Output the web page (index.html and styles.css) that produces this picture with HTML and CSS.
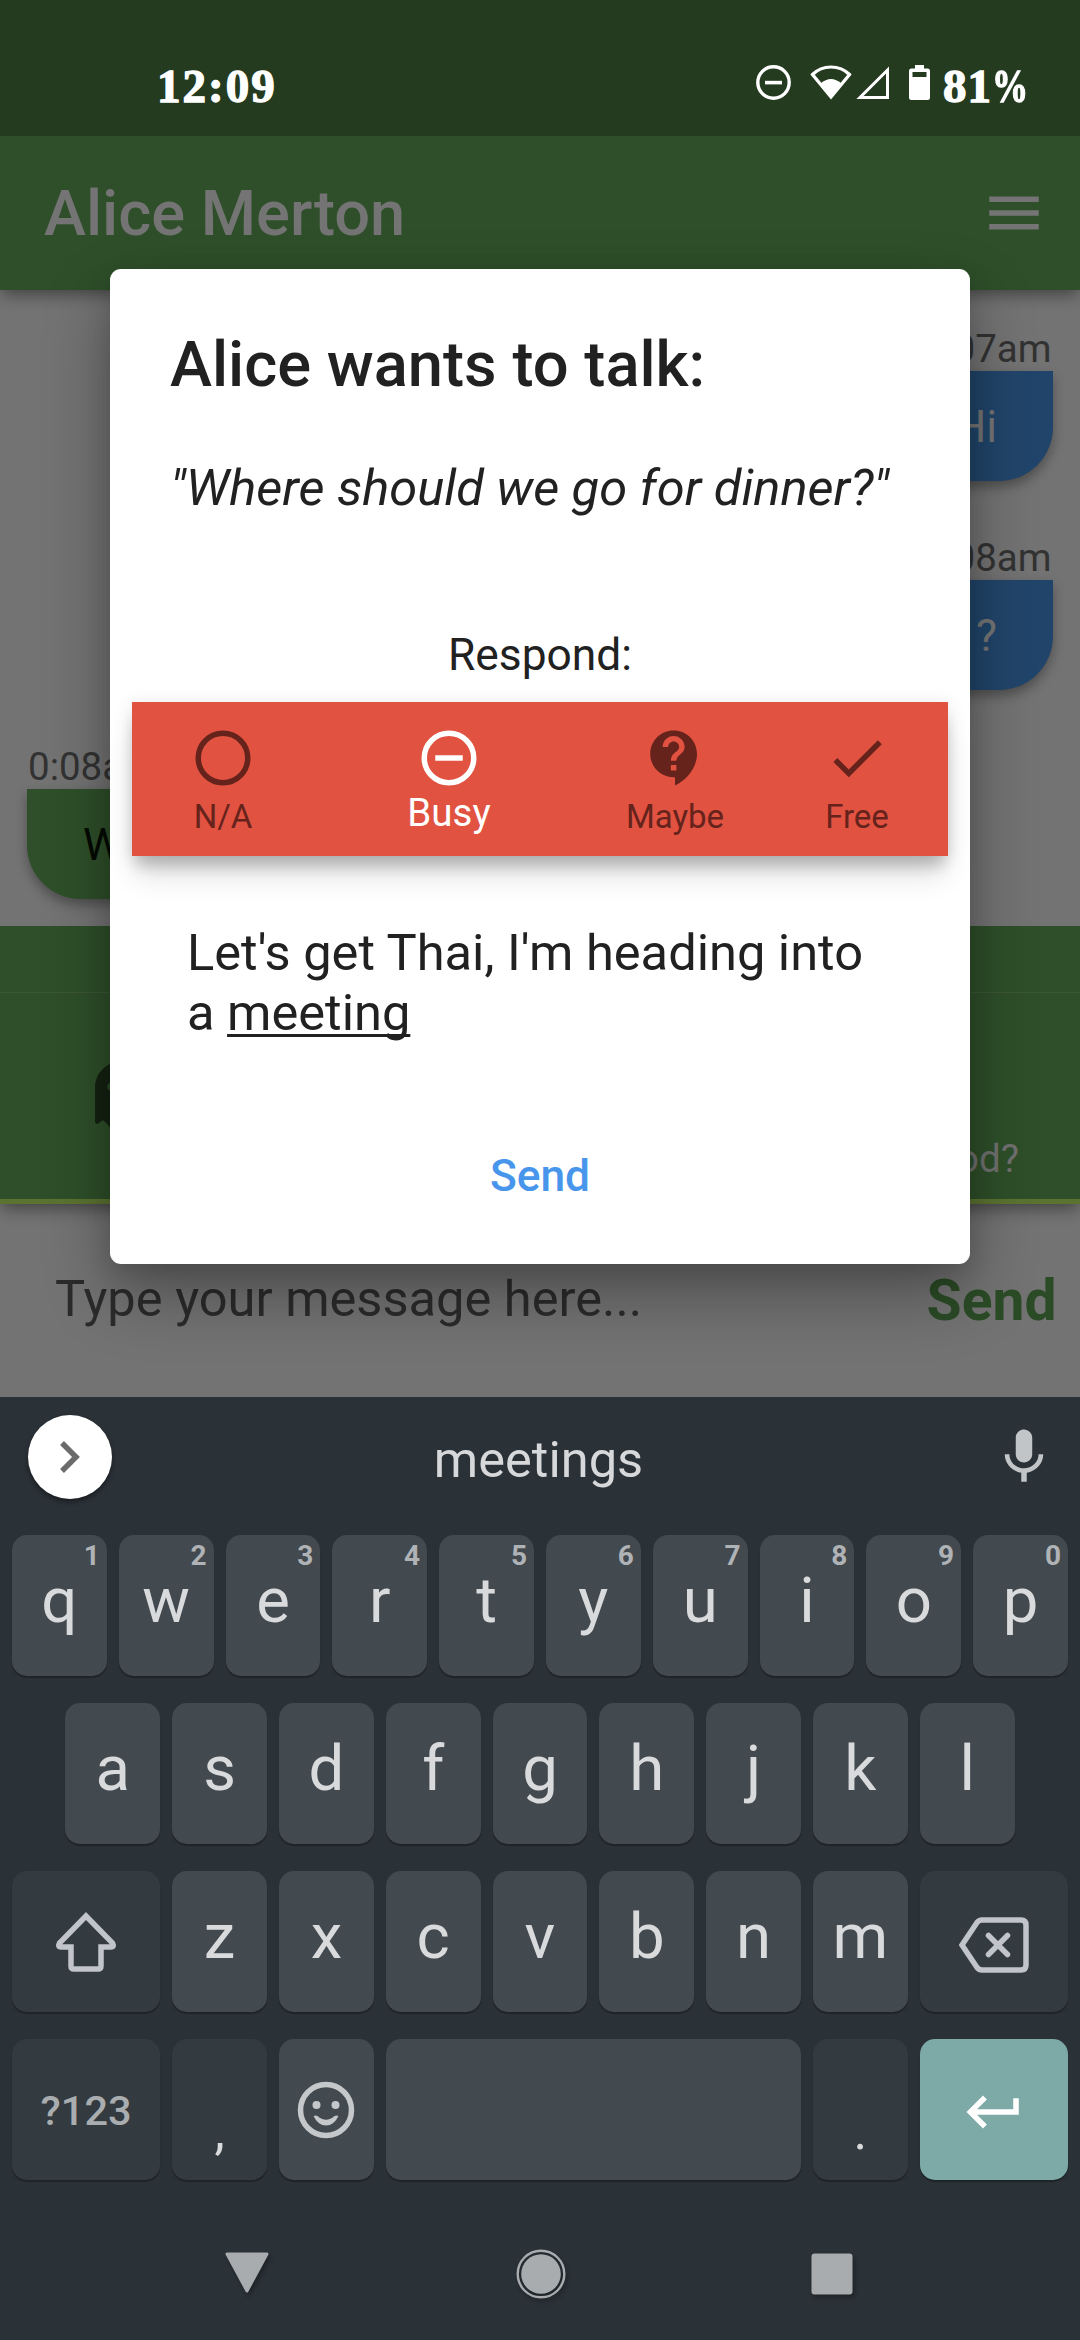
FILE: index.html
```html
<!DOCTYPE html>
<html lang="en">
<head>
<meta charset="utf-8">
<title>Alice Merton</title>
<link rel="stylesheet" href="styles.css">
</head>
<body>
<div class="phone">
  <header class="status">
    <span class="status-text">12:09</span>
    <div class="status-right">
      <svg class="dnd" width="35" height="35" viewBox="0 0 35 35"><circle cx="17.5" cy="17.5" r="15.7" fill="none" stroke="#fff" stroke-width="3.4"/><path d="M9 15.8h17v3.6H9z" fill="#fff"/></svg>
      <svg class="wifi" width="42" height="35" viewBox="0 0 42 35"><path d="M2.5 9.5C12.500 -.5 29.500 -.5 39.500 9.500L21 32z" fill="none" stroke="#fff" stroke-width="3.2"/><path d="M10.500 18.500Q21 9.500 31.500 18.500L21 33z" fill="#fff"/></svg>
      <svg class="signal" width="35" height="35" viewBox="0 0 35 35"><path d="M32.500 5V32.500H5z" fill="none" stroke="#fff" stroke-width="3"/></svg>
      <svg class="battery" width="21" height="35" viewBox="0 0 21 35"><path fill="#fff" fill-rule="evenodd" d="M6 0h9v3.500h3.500q2.500 0 2.500 2.500v26.500q0 2.500-2.500 2.500H2.500Q0 35 0 32.500V6q0-2.500 2.500-2.500H6zM3.500 7v5h14V7z"/></svg>
      <span class="status-text">81<span class="percent">%</span></span>
    </div>
  </header>
  <div class="appbar">
    <h1 class="appbar-title">Alice Merton</h1>
    <svg width="66" height="66" viewBox="0 0 24 24" fill="#747474"><path d="M3 18h18v-2H3v2zm0-5h18v-2H3v2zm0-7v2h18V6H3z"/></svg>
  </div>
  <main class="chat">
    <div class="message mine"><div class="time">0:07am</div><div class="bubble">Hi</div></div>
    <div class="message mine"><div class="time">0:08am</div><div class="bubble">?</div></div>
    <div class="message theirs"><div class="time">0:08am</div><div class="bubble">Wow</div></div>
  </main>
  <section class="panel">
    <div class="panel-head"></div>
    <div class="panel-body">
      <svg class="ghost" width="49.500" height="66" viewBox="0 0 384 512"><path fill="#142212" d="M186.100.09C81.010 3.240 0 94.920 0 200.050v263.920c0 14.260 17.230 21.390 27.310 11.310l24.920-18.530c6.660-4.950 16-3.990 21.510 2.210l42.950 48.350c6.250 6.250 16.380 6.250 22.630 0l40.720-45.850c6.370-7.170 17.560-7.170 23.920 0l40.720 45.850c6.250 6.250 16.380 6.250 22.630 0l42.950-48.350c5.510-6.200 14.850-7.170 21.510-2.210l24.920 18.530c10.080 10.080 27.310 2.940 27.310-11.310V192C384 84 294.830-3.170 186.100.09zM128 224c-17.670 0-32-14.330-32-32s14.330-32 32-32 32 14.330 32 32-14.330 32-32 32zm128 0c-17.670 0-32-14.330-32-32s14.330-32 32-32 32 14.330 32 32-14.330 32-32 32z"/></svg>
      <span class="mood">Food?</span>
    </div>
  </section>
  <div class="composer"><span class="placeholder">Type your message here...</span><span class="composer-send">Send</span></div>

  <section class="dialog">
    <h2 class="dialog-title">Alice wants to talk:</h2>
    <p class="quote">"Where should we go for dinner?"</p>
    <p class="respond">Respond:</p>
    <nav class="tabs">
      <div class="tab"><svg width="66" height="66" viewBox="0 0 24 24"><circle cx="12" cy="12" r="9" fill="none" stroke="currentColor" stroke-width="2"/></svg><span>N/A</span></div>
      <div class="tab active"><svg width="66" height="66" viewBox="0 0 24 24"><circle cx="12" cy="12" r="9" fill="none" stroke="currentColor" stroke-width="2"/><path d="M7 11h10v2H7z" fill="currentColor"/></svg><span>Busy</span></div>
      <div class="tab"><svg width="66" height="66" viewBox="0 0 24 24" fill="currentColor"><path d="M11.500 2C6.810 2 3 5.810 3 10.500S6.810 19 11.500 19h.5v3c4.860-2.340 8-7 8-11.500C20 5.810 16.190 2 11.500 2zm1 14.500h-2v-2h2v2zm0-3.500h-2c0-3.250 3-3 3-5 0-1.100-.9-2-2-2s-2 .9-2 2h-2c0-2.210 1.790-4 4-4s4 1.790 4 4c0 2.500-3 2.750-3 5z"/></svg><span>Maybe</span></div>
      <div class="tab"><svg width="66" height="66" viewBox="0 0 24 24" fill="currentColor"><path d="M9 16.170L4.830 12l-1.420 1.410L9 19 21 7l-1.410-1.410z"/></svg><span>Free</span></div>
    </nav>
    <p class="reply">Let's get Thai, I'm heading into<br>a <u>meeting</u></p>
    <div class="dialog-send">Send</div>
  </section>

  <section class="keyboard">
    <div class="suggestions">
      <div class="expand"><svg width="22" height="34" viewBox="0 0 22 34"><path d="M3 3l14 14L3 31" fill="none" stroke="#6b6b6b" stroke-width="5.500"/></svg></div>
      <span class="word">meetings</span>
      <svg class="mic" width="66" height="66" viewBox="0 0 24 24" fill="#c1c5c7"><path d="M12 14c1.660 0 2.990-1.340 2.990-3L15 5c0-1.660-1.340-3-3-3S9 3.340 9 5v6c0 1.660 1.340 3 3 3zm5.300-3c0 3-2.540 5.100-5.300 5.100S6.700 14 6.700 11H5c0 3.410 2.720 6.230 6 6.720V21h2v-3.280c3.280-.48 6-3.300 6-6.720h-1.700z"/></svg>
    </div>
    <div class="keys">
      <div class="row">
        <div class="key"><small>1</small>q</div><div class="key"><small>2</small>w</div><div class="key"><small>3</small>e</div><div class="key"><small>4</small>r</div><div class="key"><small>5</small>t</div><div class="key"><small>6</small>y</div><div class="key"><small>7</small>u</div><div class="key"><small>8</small>i</div><div class="key"><small>9</small>o</div><div class="key"><small>0</small>p</div>
      </div>
      <div class="row inset">
        <div class="key">a</div><div class="key">s</div><div class="key">d</div><div class="key">f</div><div class="key">g</div><div class="key">h</div><div class="key">j</div><div class="key">k</div><div class="key">l</div>
      </div>
      <div class="row">
        <div class="key wide dark"><svg width="62" height="60" viewBox="0 0 62 60"><path d="M31 4L4.500 31Q2.500 35 6 35H16V54Q16 57 19 57H43Q46 57 46 54V35H56Q59.500 35 57.500 31z" fill="none" stroke="#c1c4c8" stroke-width="5.500"/></svg></div>
        <div class="key">z</div><div class="key">x</div><div class="key">c</div><div class="key">v</div><div class="key">b</div><div class="key">n</div><div class="key">m</div>
        <div class="key wide dark"><svg class="backspace" width="70" height="56" viewBox="0 0 70 56"><path d="M3 28L18 5.500Q20 3 23 3H62Q67 3 67 8V48Q67 53 62 53H23Q20 53 18 50.500z" fill="none" stroke="#c1c4c8" stroke-width="5.500"/><path d="M29.500 18.500l19 19m0-19l-19 19" stroke="#c1c4c8" stroke-width="5.500" stroke-linecap="round"/></svg></div>
      </div>
      <div class="row">
        <div class="key wide dark symbols">?123</div>
        <div class="key dark punct">,</div>
        <div class="key"><svg class="smile" width="58" height="58" viewBox="0 0 58 58"><circle cx="29" cy="29" r="25.500" fill="none" stroke="#c5c8ca" stroke-width="5.500"/><circle cx="19.500" cy="24" r="4" fill="#c5c8ca"/><circle cx="38.500" cy="24" r="4" fill="#c5c8ca"/><path d="M16.500 35q2-1 4 0q8.500 7.500 17 0q2-1 4 0q-4.500 9.500-12.500 9.500T16.500 35z" fill="#c5c8ca"/></svg></div>
        <div class="key space"></div>
        <div class="key dark punct">.</div>
        <div class="key wide enter"><svg width="66" height="66" viewBox="0 0 24 24" fill="#fff"><path d="M19 7v4H5.830l3.580-3.590L8 6l-6 6 6 6 1.410-1.410L5.830 13H21V7z"/></svg></div>
      </div>
    </div>
    <div class="navbar">
      <svg width="46" height="50" viewBox="0 0 46 50"><path d="M3 5H43L23 42z" fill="#a9acae" stroke="#a9acae" stroke-width="3" stroke-linejoin="round"/></svg>
      <svg width="50" height="50" viewBox="0 0 50 50"><circle cx="25" cy="25" r="23.300" fill="none" stroke="#a9acae" stroke-width="2.400"/><circle cx="25" cy="25" r="19.800" fill="#a9acae"/></svg>
      <svg width="42" height="50" viewBox="0 0 42 50"><rect x=".5" y="4.500" width="41" height="41" rx="3" fill="#a9acae"/></svg>
    </div>
  </section>
</div>
</body>
</html>
```
FILE: styles.css
```css
* { box-sizing: border-box; margin: 0; padding: 0; }
body { font-family: Roboto, "Liberation Sans", sans-serif; background: #737373; }
svg { display: block; flex: none; }
.phone { position: relative; display: flex; flex-direction: column; width: 1080px; height: 2340px; overflow: hidden; background: #737373; }

.status { position: relative; z-index: 1; height: 136px; flex: none; background: #243b20; color: #fff; display: flex; justify-content: space-between; padding: 65px 0 0 157px; }
.status-text { font: 700 47px/42px "Liberation Serif", serif; letter-spacing: 2px; height: 42px; -webkit-text-stroke: 1.3px #fff; }
.status-right { display: flex; width: 324px; }
.status-right .status-text { white-space: nowrap; letter-spacing: 1px; }
.percent { display: inline-block; transform: scaleX(.77); transform-origin: left; }
.wifi { margin-left: 19px; }
.signal { margin-left: 3px; }
.battery { margin: 0 13px 0 19px; }

.appbar { height: 154px; flex: none; background: #2e4f29; display: flex; align-items: center; justify-content: space-between; padding: 0 33px 0 44px; box-shadow: 0 6px 16px -2px rgba(0,0,0,.45); position: relative; }
.appbar-title { font-size: 63.250px; font-weight: 500; line-height: 76px; color: #747474; }

.chat { height: 636px; flex: none; padding: 37px 27px 0; }
.message { display: flex; flex-direction: column; margin-bottom: 55px; }
.mine { align-items: flex-end; }
.theirs { align-items: flex-start; }
.time { font-size: 38.500px; line-height: 44px; color: #323232; padding: 0 1.500px 0 1px; }
.bubble { height: 110px; min-width: 250px; line-height: 112px; font-size: 44.300px; padding: 0 56px; border-radius: 0 0 54px 54px; box-shadow: 0 6px 12px rgba(0,0,0,.32); }
.mine .bubble { background: #21456a; color: #757575; text-align: right; }
.theirs .bubble { background: #2e4f29; color: #050a04; }

.panel { height: 278px; flex: none; background: #2e4f29; border-bottom: 5px solid #5b7331; box-shadow: 0 6px 16px -2px rgba(0,0,0,.45); clip-path: inset(0 0 -40px 0); display: flex; flex-direction: column; position: relative; }
.panel-head { height: 67px; border-bottom: 1px solid #3b5636; }
.panel-body { flex: 1; display: flex; justify-content: space-between; padding: 69px 61px 0 95px; }
.mood { font-size: 38.500px; line-height: 44px; color: #707070; margin-top: 75px; }

.composer { height: 193px; flex: none; display: flex; justify-content: space-between; align-items: flex-start; padding: 0 23.500px 0 55px; }
.placeholder { font-size: 50.600px; line-height: 60px; color: #2b2b2b; margin-top: 65px; }
.composer-send { font-size: 57px; font-weight: 700; line-height: 70px; color: #2b4b26; margin-top: 62px; }

.dialog { position: absolute; left: 110px; top: 269.300px; width: 860px; height: 994.300px; background: #fff; border-radius: 11px; color: #212121; box-shadow: 0 30px 66px rgba(0,0,0,.32), 0 8px 24px rgba(0,0,0,.12); padding: 57px 22px 0; }
.dialog-title { font-size: 63.250px; font-weight: 500; line-height: 76px; padding-left: 38px; }
.quote { font-size: 50.600px; line-height: 60px; font-style: italic; margin-top: 55.400px; padding-left: 38px; white-space: nowrap; }
.respond { font-size: 44.300px; line-height: 52px; margin-top: 111.200px; text-align: center; }
.tabs { margin-top: 21.600px; height: 154px; background: #e15241; display: grid; grid-template-columns: 182px 270px 182px 182px; box-shadow: 0 22px 28px -4px rgba(0,0,0,.14), 0 14px 14px -4px rgba(0,0,0,.16), 0 2px 18px rgba(0,0,0,.1); }
.tab { display: flex; flex-direction: column; align-items: center; padding-top: 23px; color: #66231c; font-size: 33px; line-height: 40px; gap: 5.500px; }
.tab.active { color: #fff; font-size: 38.500px; line-height: 42px; gap: 1px; }
.reply { font-size: 50.600px; line-height: 60px; margin-top: 66.500px; padding-left: 55px; white-space: nowrap; }
.reply u { text-decoration-thickness: 2.700px; text-underline-offset: 4px; text-decoration-skip-ink: none; }
.dialog-send { font-size: 44.300px; font-weight: 500; line-height: 52px; margin-top: 107px; text-align: center; color: #4896ec; }

.keyboard { position: relative; height: 943px; flex: none; background: #2a3137; }
.suggestions { height: 138px; display: grid; grid-template-columns: 84px 1fr 84px; padding: 18px 14px 0 28px; color: #d6d8da; }
.expand { width: 84px; height: 84px; border-radius: 50%; background: #fff; display: flex; align-items: center; justify-content: center; box-shadow: 0 3px 5px rgba(0,0,0,.4); }
.word { font-size: 50.600px; line-height: 60px; text-align: center; margin-top: 15px; padding-right: 17px; }
.mic { margin: 9px 0 0 9px; }
.keys { display: flex; flex-direction: column; gap: 27px; padding: 0 12px; }
.row { display: flex; gap: 12px; height: 141px; }
.row.inset { padding: 0 53.400px; }
.key { position: relative; flex: 0 0 94.800px; border-radius: 15px; background: #42494f; box-shadow: 0 2px 1px #1e2428; color: #d9dadc; font-size: 63.500px; text-align: center; line-height: 132px; display: flex; justify-content: center; }
.key small { position: absolute; right: 7px; top: 5px; font-size: 28px; line-height: 32px; font-weight: 700; color: #b0b3b6; }
.key svg { margin-top: 41px; }
.key .backspace { margin-top: 46px; }
.key .smile { margin-top: 42px; }
.wide { flex-basis: 148.200px; }
.dark { background: #333a40; }
.space { flex: 1; }
.symbols { font-size: 41.500px; font-weight: 500; line-height: 143px; color: #a9adaf; }
.punct { font-size: 52px; line-height: 186px; }
.enter { background: #7da9a6; }
.key.enter svg { margin-top: 40px; }
.navbar { display: flex; justify-content: space-between; padding: 69px 227px 0 224px; }
.navbar svg { filter: drop-shadow(2px 3px 2px rgba(0,0,0,.3)); }
```
